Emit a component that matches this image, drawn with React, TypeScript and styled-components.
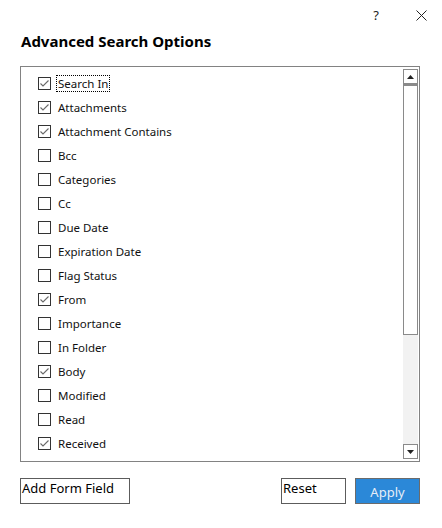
import styled, { createGlobalStyle } from 'styled-components'

const GlobalStyle = createGlobalStyle`
  html, body {
    margin: 0;
    padding: 0;
    background: #ffffff;
  }
  body {
    font-family: "Noto Sans", "Open Sans", sans-serif;
    color: #000;
  }
`

const Dialog = styled.div`
  width: 442px;
  height: 528px;
  box-sizing: border-box;
  padding: 0 22px 0 20px;
  display: flex;
  flex-direction: column;
`

const TitleBar = styled.div`
  height: 30px;
  margin-right: -8px;
  display: flex;
  justify-content: flex-end;
  align-items: center;
  gap: 31px;
`

const TitleButton = styled.span`
  font-family: "Noto Sans", sans-serif;
  font-size: 13px;
  line-height: 1;
  color: #222;
  width: 14px;
  display: flex;
  justify-content: center;
`

const Heading = styled.h1`
  margin: 1px 0 0 1px;
  font-family: "Noto Sans", sans-serif;
  font-weight: 700;
  font-size: 15px;
  line-height: 20px;
  height: 35px;
`

const Panel = styled.div`
  width: 400px;
  height: 396px;
  box-sizing: border-box;
  border: 1px solid #828282;
  padding: 2px 1px 2px 0;
  display: flex;
`

const List = styled.ul`
  flex: 1;
  margin: 0;
  padding: 2px 0 0 17px;
  list-style: none;
  overflow: hidden;
`

const Row = styled.li`
  height: 24px;
  display: flex;
  align-items: center;
  gap: 6px;
`

const Box = styled.span`
  width: 13px;
  height: 13px;
  box-sizing: border-box;
  border: 1px solid #333;
  background: #fff;
  display: flex;
  align-items: center;
  justify-content: center;
  flex-shrink: 0;
`

const Label = styled.span<{ $focused?: boolean }>`
  font-size: 11.5px;
  line-height: 15px;
  padding: 0 1px;
  color: #111;
  outline: ${(p) => (p.$focused ? '1px dotted #000' : 'none')};
  outline-offset: 0;
`

const Scrollbar = styled.div`
  width: 15px;
  display: flex;
  flex-direction: column;
  background: #f2f2f2;
`

const ArrowButton = styled.div`
  height: 15px;
  box-sizing: border-box;
  border: 1px solid #8a8a8a;
  background: #fff;
  display: flex;
  align-items: center;
  justify-content: center;
`

const Thumb = styled.div`
  height: 251px;
  box-sizing: border-box;
  border: 1px solid #8a8a8a;
  border-top-width: 2px;
  background: #fff;
`

const Track = styled.div`
  flex: 1;
`

const Footer = styled.div`
  margin-top: 16px;
  display: flex;
  align-items: flex-start;
  gap: 9px;
`

const Button = styled.button<{ $primary?: boolean; $w: number }>`
  width: ${(p) => p.$w}px;
  box-sizing: border-box;
  border: 1px solid ${(p) => (p.$primary ? '#6b6b6b' : '#5c5c5c')};
  background: ${(p) => (p.$primary ? '#2b88d8' : '#fff')};
  color: ${(p) => (p.$primary ? '#e6eef7' : '#000')};
  font-family: "Noto Sans", sans-serif;
  font-size: 13px;
  line-height: 18px;
  padding: ${(p) => (p.$primary ? '4px 0 2px' : '0 1px 6px')};
  text-align: ${(p) => (p.$primary ? 'center' : 'left')};
  display: block;
  cursor: pointer;
`

const Spacer = styled.div`
  flex: 1;
`

const items: [string, boolean][] = [
  ['Search In', true],
  ['Attachments', true],
  ['Attachment Contains', true],
  ['Bcc', false],
  ['Categories', false],
  ['Cc', false],
  ['Due Date', false],
  ['Expiration Date', false],
  ['Flag Status', false],
  ['From', true],
  ['Importance', false],
  ['In Folder', false],
  ['Body', true],
  ['Modified', false],
  ['Read', false],
  ['Received', true],
]

function Check() {
  return (
    <svg width="11" height="11" viewBox="0 0 11 11">
      <polyline points="1.5,5.5 4,8 9.5,2.5" fill="none" stroke="#6a6a6a" strokeWidth="1.1" />
    </svg>
  )
}

function Triangle({ down }: { down?: boolean }) {
  return (
    <svg width="7" height="4" viewBox="0 0 7 4">
      <polygon points={down ? '0,0 7,0 3.5,4' : '0,4 7,4 3.5,0'} fill="#222" />
    </svg>
  )
}

export default function App() {
  return (
    <>
      <GlobalStyle />
      <Dialog>
        <TitleBar>
          <TitleButton>?</TitleButton>
          <TitleButton>
            <svg width="11" height="11" viewBox="0 0 11 11">
              <path d="M0.5 0.5 L10.5 10.5 M10.5 0.5 L0.5 10.5" stroke="#222" strokeWidth="1" />
            </svg>
          </TitleButton>
        </TitleBar>
        <Heading>Advanced Search Options</Heading>
        <Panel>
          <List>
            {items.map(([name, checked], i) => (
              <Row key={name}>
                <Box>{checked && <Check />}</Box>
                <Label $focused={i === 0}>{name}</Label>
              </Row>
            ))}
          </List>
          <Scrollbar>
            <ArrowButton>
              <Triangle />
            </ArrowButton>
            <Thumb />
            <Track />
            <ArrowButton>
              <Triangle down />
            </ArrowButton>
          </Scrollbar>
        </Panel>
        <Footer>
          <Button $w={110}>Add Form Field</Button>
          <Spacer />
          <Button $w={65}>Reset</Button>
          <Button $w={65} $primary>
            Apply
          </Button>
        </Footer>
      </Dialog>
    </>
  )
}
